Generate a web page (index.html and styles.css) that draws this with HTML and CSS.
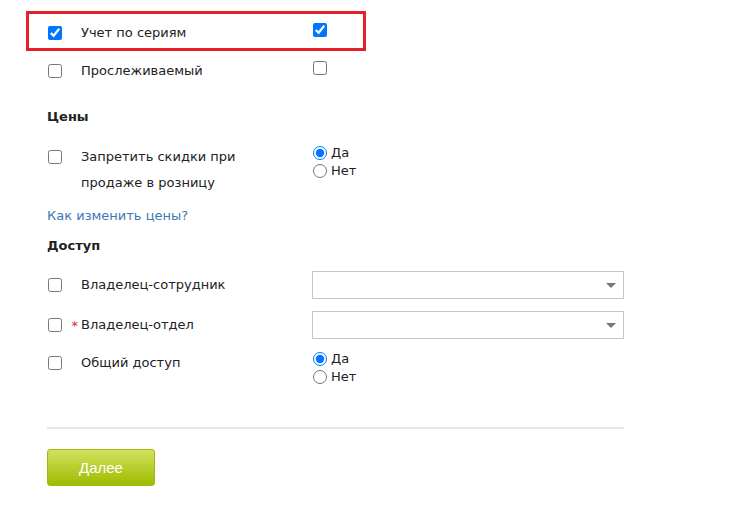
FILE: index.html
```html
<!DOCTYPE html>
<html lang="ru">
<head>
    <meta charset="UTF-8">
    <meta name="viewport" content="width=device-width, initial-scale=1.0">
    <title>Товар</title>
    <link rel="stylesheet" href="styles.css">
</head>
<body>
    <div class="form">
        <div class="row row-marked">
            <div class="col-check"><input type="checkbox" checked></div>
            <label class="col-label">Учет по сериям</label>
            <div class="col-value"><input type="checkbox" class="value-check" checked></div>
        </div>
        <div class="row row-second">
            <div class="col-check"><input type="checkbox"></div>
            <label class="col-label">Прослеживаемый</label>
            <div class="col-value"><input type="checkbox" class="value-check"></div>
        </div>

        <h3 class="section-title title-prices">Цены</h3>
        <div class="row row-prices">
            <div class="col-check"><input type="checkbox"></div>
            <label class="col-label">Запретить скидки при продаже в розницу</label>
            <div class="col-value radios">
                <label><input type="radio" name="discount" checked>Да</label>
                <label><input type="radio" name="discount">Нет</label>
            </div>
        </div>
        <a href="#" class="help-link">Как изменить цены?</a>

        <h3 class="section-title title-access">Доступ</h3>
        <div class="row row-select row-owner">
            <div class="col-check"><input type="checkbox"></div>
            <label class="col-label">Владелец-сотрудник</label>
            <div class="col-value"><div class="select"><span class="arrow"></span></div></div>
        </div>
        <div class="row row-select">
            <div class="col-check"><input type="checkbox"><span class="required">*</span></div>
            <label class="col-label">Владелец-отдел</label>
            <div class="col-value"><div class="select"><span class="arrow"></span></div></div>
        </div>
        <div class="row row-shared">
            <div class="col-check"><input type="checkbox"></div>
            <label class="col-label">Общий доступ</label>
            <div class="col-value radios">
                <label><input type="radio" name="shared" checked>Да</label>
                <label><input type="radio" name="shared">Нет</label>
            </div>
        </div>

        <hr class="divider">
        <button class="btn-next">Далее</button>
    </div>
</body>
</html>
```
FILE: styles.css
```css
body {
    margin: 0;
    font-family: 'DejaVu Sans', Verdana, sans-serif;
    font-size: 13px;
    color: #222;
    background: #fff;
}
.form {
    padding: 11px 0 0 47px;
    width: 577px;
}
.row {
    display: grid;
    grid-template-columns: 34px 231px 312px;
    line-height: 26px;
    padding: 6px 0;
}
.col-label {
    padding-right: 24px;
}
.row-marked {
    margin-left: -21px;
    padding: 6px 0 2px 18px;
    border: 3px solid #e3202b;
    grid-template-columns: 34px 231px 40px;
    box-sizing: border-box;
    width: 340px;
}
.row-second {
    padding-top: 7px;
}
.col-check {
    display: flex;
    align-items: flex-start;
    justify-content: space-between;
}
.col-check input {
    margin: 6px 0 0 1px;
    width: 14px;
    height: 14px;
}
.required {
    color: #e3202b;
    line-height: 20px;
    margin: 4px 3px 0 0;
    font-size: 13px;
}
.col-value .value-check {
    margin: 0 0 0 1px;
    width: 14px;
    height: 14px;
}
.section-title {
    margin: 0;
    font-size: 13px;
    line-height: 20px;
    font-weight: bold;
}
.title-prices {
    margin-top: 17px;
}
.title-access {
    margin-top: 10px;
}
.row-prices {
    margin-top: 11px;
}
.radios {
    display: flex;
    flex-direction: column;
    line-height: 18px;
}
.radios label {
    display: flex;
    align-items: center;
}
.radios input {
    margin: 0 4px 0 1px;
    width: 14px;
    height: 14px;
}
.help-link {
    display: block;
    margin-top: 4px;
    line-height: 20px;
    color: #3a79b4;
    text-decoration: none;
}
.row-owner {
    margin-top: 9px;
}
.row-select {
    line-height: 28px;
}
.row-select .col-check input {
    margin-top: 7px;
}
.row-select .required {
    margin-top: 5px;
}
.select {
    position: relative;
    height: 28px;
    border: 1px solid #c6c6c6;
    box-sizing: border-box;
}
.arrow {
    position: absolute;
    right: 7px;
    top: 11px;
    border-left: 5px solid transparent;
    border-right: 5px solid transparent;
    border-top: 5px solid #777;
}
.row-shared {
    padding-top: 5px;
}
.divider {
    margin: 35px 0 0;
    border: none;
    height: 2px;
    background: #e6e6e6;
}
.btn-next {
    margin-top: 20px;
    width: 108px;
    height: 37px;
    border: 1px solid #a2bb10;
    border-radius: 3px;
    background: linear-gradient(#d0e25e, #9fbb00);
    color: #fff;
    font-family: 'Liberation Sans', Arial, sans-serif;
    font-size: 15px;
    cursor: pointer;
}
```
